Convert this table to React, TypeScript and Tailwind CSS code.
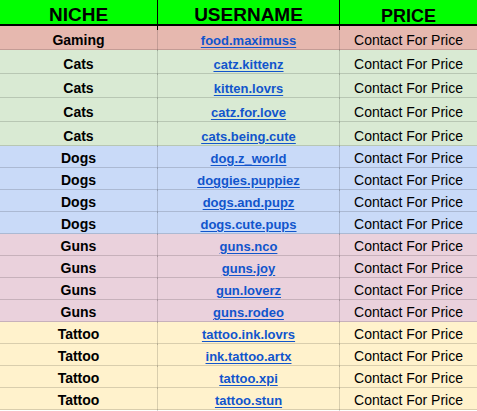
type Row = {
  niche: string;
  username: string;
  bg: string;
  tall?: boolean;
};

const rows: Row[] = [
  { niche: "Gaming", username: "food.maximuss", bg: "bg-[#e6b8af]", tall: true },
  { niche: "Cats", username: "catz.kittenz", bg: "bg-[#d9ead3]", tall: true },
  { niche: "Cats", username: "kitten.lovrs", bg: "bg-[#d9ead3]", tall: true },
  { niche: "Cats", username: "catz.for.love", bg: "bg-[#d9ead3]", tall: true },
  { niche: "Cats", username: "cats.being.cute", bg: "bg-[#d9ead3]", tall: true },
  { niche: "Dogs", username: "dog.z_world", bg: "bg-[#c9daf8]" },
  { niche: "Dogs", username: "doggies.puppiez", bg: "bg-[#c9daf8]" },
  { niche: "Dogs", username: "dogs.and.pupz", bg: "bg-[#c9daf8]" },
  { niche: "Dogs", username: "dogs.cute.pups", bg: "bg-[#c9daf8]" },
  { niche: "Guns", username: "guns.nco", bg: "bg-[#ead1dc]" },
  { niche: "Guns", username: "guns.joy", bg: "bg-[#ead1dc]" },
  { niche: "Guns", username: "gun.loverz", bg: "bg-[#ead1dc]" },
  { niche: "Guns", username: "guns.rodeo", bg: "bg-[#ead1dc]" },
  { niche: "Tattoo", username: "tattoo.ink.lovrs", bg: "bg-[#fff2cc]" },
  { niche: "Tattoo", username: "ink.tattoo.artx", bg: "bg-[#fff2cc]" },
  { niche: "Tattoo", username: "tattoo.xpi", bg: "bg-[#fff2cc]" },
  { niche: "Tattoo", username: "tattoo.stun", bg: "bg-[#fff2cc]" },
];

export default function App() {
  return (
    <div className="w-[477px] h-[411px] bg-white font-['Liberation_Sans',Arial,sans-serif] text-black overflow-hidden">
      <div className="grid grid-cols-[158px_182px_1fr] h-[26px] bg-[#00ff00] border-b-2 border-black font-bold">
        <div className="flex items-center justify-center border-r border-black text-[19px]">NICHE</div>
        <div className="flex items-center justify-center border-r border-black text-[19px]">USERNAME</div>
        <div className="flex items-center justify-center text-[18px] pt-[3px]">PRICE</div>
      </div>
      {rows.map((r, i) => {
        // taller rows at the top sit their text a bit lower
        const pad = r.tall ? "pt-[4px]" : "pt-[2px]";
        return (
          <div
            key={i}
            className={`grid grid-cols-[158px_182px_1fr] border-b border-black/15 ${r.bg} ${
              r.tall ? "h-[24px]" : "h-[22px]"
            }`}
          >
            <div className={`flex items-center justify-center border-r border-black/15 text-[14px] font-bold ${pad}`}>
              {r.niche}
            </div>
            <div className={`flex items-center justify-center border-r border-black/15 ${pad}`}>
              <a href="#" className="text-[13px] font-bold text-[#1155cc] underline underline-offset-2">
                {r.username}
              </a>
            </div>
            <div className={`flex items-center justify-center text-[14px] ${pad}`}>Contact For Price</div>
          </div>
        );
      })}
    </div>
  );
}
